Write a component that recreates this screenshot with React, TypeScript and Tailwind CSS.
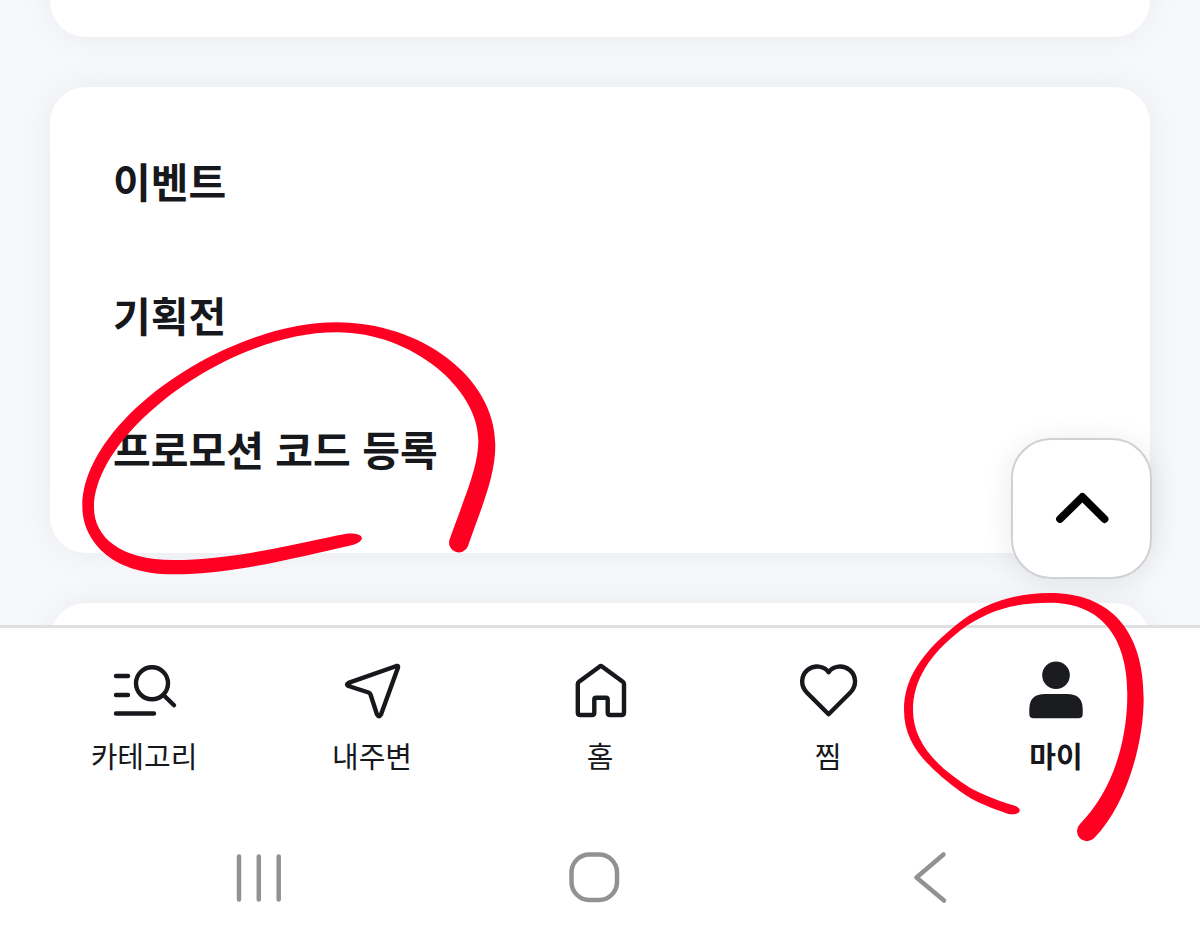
import type { ReactNode } from "react";

const menuItems = ["이벤트", "기획전", "프로모션 코드 등록"];

const iconClass = "h-[72px] w-[72px]";

export default function App() {
  return (
    <div
      lang="ko"
      className="flex min-h-screen flex-col bg-white font-['Noto_Sans_CJK_KR',sans-serif] text-[#17181c]"
    >
      <main className="relative flex flex-col gap-[50px] overflow-hidden bg-[#f6f8fc] px-[50px]">
        <Card className="-mt-10 h-[77px]" />

        <Card className="relative z-10 pt-[26px] pb-[38px]">
          <ul>
            {menuItems.map((item) => (
              <li key={item}>
                <a
                  href="#"
                  className="flex h-[134px] items-center px-[63px] text-[41px] leading-[60px] font-bold"
                >
                  {item}
                </a>
              </li>
            ))}
          </ul>
          <svg
            viewBox="0 0 1320 840"
            className="pointer-events-none absolute top-[223px] left-5 h-[280px] w-[440px]"
            fill="#ff0022"
            aria-hidden="true"
          >
            <path d="M1194 708C1235 590 1276 500 1276 405C1276 200 1050 37 800 37C470 37 37 330 37 590C37 680 110 793 310 793C500 793 700 737 835 708C890 697 890 668 830 671C700 695 500 750 310 750C150 750 72 680 72 593C72 370 470 67 800 67C1030 67 1225 240 1225 390C1225 470 1190 545 1139 688A29 29 0 0 0 1194 708Z" />
          </svg>
        </Card>

        <Card className="-mb-14 h-[78px]" />

        <button
          type="button"
          aria-label="맨 위로"
          className="absolute right-12 bottom-[46px] z-20 flex h-[141px] w-[141px] items-center justify-center rounded-[40px] border-2 border-[#d0d1d3] bg-white shadow-[0_4px_30px_rgba(0,0,0,0.09)]"
        >
          <svg
            viewBox="0 0 72 72"
            className={iconClass}
            fill="none"
            stroke="#000"
            strokeWidth="7.8"
            strokeLinecap="round"
            strokeLinejoin="round"
          >
            <path d="M14 46 36.4 24 58.500 46" />
          </svg>
        </button>
      </main>

      <nav className="relative z-20 border-t-3 border-[#dfe0e2] px-[30px] pt-[27px]">
        <ul className="grid grid-cols-5">
          <Tab label="카테고리">
            <LineIcon>
              <path d="M8 21h12M8 40h12M8 58.500h38M56 40.500 66 50.300" />
              <circle cx="44" cy="28.300" r="16" />
            </LineIcon>
          </Tab>
          <Tab label="내주변">
            <LineIcon>
              <path d="M60.500 11 12.500 27.800Q9.500 29.500 12.500 31L32.500 37.500Q34 38 34.600 39.800L41 59.500Q43 63 45 59.500L62 12.500Q62.500 10.500 60.500 11Z" />
            </LineIcon>
          </Tab>
          <Tab label="홈">
            <LineIcon>
              <path d="M35.800 11.400 15 26.700Q13.800 27.600 13.800 29V57.500Q13.800 60 16.300 60H28Q30.300 60 30.300 57.500V44.500Q30.300 42.700 32 42.700H42Q43.700 42.700 43.700 44.500V57.500Q43.700 60 46 60H57.500Q60 60 60 57.500V29Q60 27.600 58.800 26.700L38 11.400Q36.900 10.600 35.800 11.400Z" />
            </LineIcon>
          </Tab>
          <Tab label="찜">
            <LineIcon>
              <path d="M36.600 17.200C32 10.500 22 9.800 15.500 15C8.500 21 8.500 31 14.800 37.500L36.600 59.200 58.400 37.500C64.700 31 64.700 21 57.700 15C51.200 9.800 41.200 10.500 36.600 17.200Z" />
            </LineIcon>
          </Tab>
          <Tab label="마이" active>
            <svg viewBox="0 0 72 72" className={iconClass} fill="#1b1c20">
              <circle cx="36" cy="20.300" r="13.800" />
              <path d="M25 39H47Q62.700 39 62.700 54V59Q62.700 63.300 58.500 63.300H13.500Q9.300 63.300 9.300 59V54Q9.300 39 25 39Z" />
            </svg>
            <svg
              viewBox="0 0 930 840"
              className="pointer-events-none absolute -top-[75px] -left-[52px] h-[280px] w-[310px] max-w-none"
              fill="#ff0022"
              aria-hidden="true"
            >
              <path d="M612 775C705 680 761 500 761 355C761 150 660 39 480 39C330 39 240 100 190 142C90 225 42 300 42 390C42 500 120 565 210 634C255 668 315 688 355 702C392 708 402 685 370 676C330 664 280 645 240 623C130 555 69 480 69 390C69 300 120 222 210 152C290 92 370 68 480 68C640 68 712 180 712 340C712 500 660 640 570 732A30 30 0 0 0 612 775Z" />
            </svg>
          </Tab>
        </ul>
      </nav>

      <div className="grid grid-cols-3 justify-items-center pt-[68px] pr-[102px] pb-[39px] pl-[90px]">
        <SystemButton label="최근 앱">
          <path d="M17 15.500v43M36.800 15.500v43M56.700 15.500v43" />
        </SystemButton>
        <SystemButton label="홈 화면">
          <rect x="13.500" y="13.500" width="45.500" height="45.500" rx="18" />
        </SystemButton>
        <SystemButton label="뒤로">
          <path d="M49.500 13.500 22.500 36.500 50 59.500" />
        </SystemButton>
      </div>
    </div>
  );
}

function Card({
  className,
  children,
}: {
  className: string;
  children?: ReactNode;
}) {
  return (
    <section
      className={`rounded-[36px] bg-white shadow-[0_0_36px_rgba(0,0,0,0.06)] ${className}`}
    >
      {children}
    </section>
  );
}

function Tab({
  label,
  active = false,
  children,
}: {
  label: string;
  active?: boolean;
  children: ReactNode;
}) {
  return (
    <li className="relative">
      <a
        href="#"
        aria-current={active ? "page" : undefined}
        className="flex flex-col items-center gap-2.5"
      >
        {children}
        <span
          className={`text-[29px] leading-9 ${active ? "font-bold" : "font-normal"}`}
        >
          {label}
        </span>
      </a>
    </li>
  );
}

function LineIcon({ children }: { children: ReactNode }) {
  return (
    <svg
      viewBox="0 0 72 72"
      className={iconClass}
      fill="none"
      stroke="#17181c"
      strokeWidth="4.4"
      strokeLinecap="round"
      strokeLinejoin="round"
    >
      {children}
    </svg>
  );
}

function SystemButton({
  label,
  children,
}: {
  label: string;
  children: ReactNode;
}) {
  return (
    <button type="button" aria-label={label}>
      <svg
        viewBox="0 0 72 72"
        className={iconClass}
        fill="none"
        stroke="#929292"
        strokeWidth="4.5"
        strokeLinecap="round"
        strokeLinejoin="round"
      >
        {children}
      </svg>
    </button>
  );
}
